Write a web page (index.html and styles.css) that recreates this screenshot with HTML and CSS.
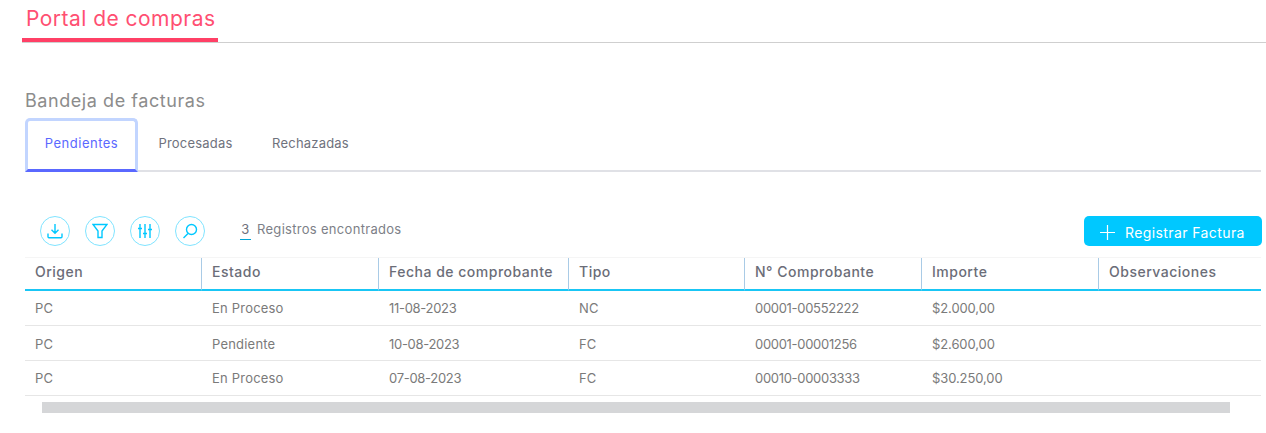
FILE: index.html
```html
<!DOCTYPE html>
<html>
  <head>
    <title>Portal de compras</title>
    <meta name="viewport" content="width=device-width, initial-scale=1.0" />
    <link rel="stylesheet" href="styles.css">
  </head>
  <body>
    <div class="portal-header">
      <div class="portal-title">Portal de compras</div>
    </div>

    <div class="inbox">
      <h2>Bandeja de facturas</h2>
      <div class="tabs">
        <div class="tab active">Pendientes</div>
        <div class="tab">Procesadas</div>
        <div class="tab">Rechazadas</div>
      </div>

      <div class="toolbar">
        <div class="icon-buttons">
          <div class="icon-button">
            <svg width="16" height="16" viewBox="0 0 16 16"><path d="M8 1v9M4.500 6.800 8 10.200l3.500-3.400M1 10.500v3.200a1 1 0 0 0 1 1h12a1 1 0 0 0 1-1v-3.200"/></svg>
          </div>
          <div class="icon-button">
            <svg width="16" height="16" viewBox="0 0 16 16"><path d="M1 1.500h14L10 8v6.500H6V8z"/></svg>
          </div>
          <div class="icon-button">
            <svg width="16" height="16" viewBox="0 0 16 16"><path d="M3 1v14M8 1v14M13 1v14M1 5.500h4M6 10.500h4M11 6.500h4"/></svg>
          </div>
          <div class="icon-button">
            <svg width="16" height="16" viewBox="0 0 16 16"><circle cx="9.500" cy="6.500" r="5"/><path d="M6 10.500 1.500 15"/></svg>
          </div>
        </div>
        <div class="record-count"><span class="count">3</span>Registros encontrados</div>
        <button class="action-button">
          <svg width="15" height="15" viewBox="0 0 15 15"><path d="M7.500 0v15M0 7.500h15"/></svg>
          Registrar Factura
        </button>
      </div>

      <table class="invoice-table">
        <thead>
          <tr>
            <th class="col-origin">Origen</th>
            <th class="col-state">Estado</th>
            <th class="col-date">Fecha de comprobante</th>
            <th class="col-type">Tipo</th>
            <th class="col-number">N° Comprobante</th>
            <th class="col-amount">Importe</th>
            <th>Observaciones</th>
          </tr>
        </thead>
        <tbody>
          <tr>
            <td>PC</td>
            <td>En Proceso</td>
            <td class="digits">11-08-2023</td>
            <td>NC</td>
            <td class="digits">00001-00552222</td>
            <td class="money">$2.000,00</td>
            <td></td>
          </tr>
          <tr>
            <td>PC</td>
            <td>Pendiente</td>
            <td class="digits">10-08-2023</td>
            <td>FC</td>
            <td class="digits">00001-00001256</td>
            <td class="money">$2.600,00</td>
            <td></td>
          </tr>
          <tr>
            <td>PC</td>
            <td>En Proceso</td>
            <td class="digits">07-08-2023</td>
            <td>FC</td>
            <td class="digits">00010-00003333</td>
            <td class="money">$30.250,00</td>
            <td></td>
          </tr>
        </tbody>
      </table>
      <div class="scroll-track"><div class="scroll-thumb"></div></div>
    </div>
  </body>
</html>
```

FILE: styles.css
```css
body {
  font-family: Inter, "Noto Sans", sans-serif;
  background-color: #fff;
  margin: 0;
  padding: 0;
  height: 433px;
  overflow: hidden;
}

.portal-header {
  margin-left: 22px;
  border-bottom: 1px solid #cfcfcf;
  height: 42px;
}

.portal-title {
  width: 196px;
  height: 42px;
  box-sizing: border-box;
  border-bottom: 4px solid #ff4066;
  margin-bottom: -1px;
  padding: 5px 0 0 4px;
  font-size: 21px;
  line-height: 27px;
  letter-spacing: 0.47px;
  color: #ff4f72;
  white-space: nowrap;
}

.inbox {
  padding: 0 5px 0 25px;
}

h2 {
  margin: 46px 0 0;
  font-size: 18px;
  line-height: 24px;
  font-weight: 400;
  letter-spacing: 0.56px;
  color: #8c8c8c;
}

.tabs {
  display: flex;
  margin-top: 5px;
  height: 54px;
  box-sizing: border-box;
  border-bottom: 2px solid #e0e1e6;
}

.tab {
  width: 113px;
  height: 54px;
  box-sizing: border-box;
  padding-top: 15px;
  font-size: 13px;
  line-height: 20px;
  letter-spacing: 0.2px;
  text-align: center;
  color: #6f727d;
}

.tab + .tab {
  width: 114px;
  padding-left: 1px;
}

.tab:last-child {
  padding-left: 3px;
}

.tab.active {
  color: #5a68ff;
  letter-spacing: 0.5px;
  border: 3px solid #c2d5ff;
  border-bottom: 3px solid #5a68ff;
  border-radius: 5px 5px 0 0;
  padding-top: 12px;
}

.toolbar {
  display: flex;
  align-items: center;
  margin-top: 44px;
  height: 30px;
  padding-left: 15px;
  margin-right: -1px;
}

.icon-buttons {
  display: flex;
  gap: 15px;
}

.icon-button {
  width: 30px;
  height: 30px;
  box-sizing: border-box;
  border: 1px solid #7fe4ff;
  border-radius: 50%;
  display: flex;
  align-items: center;
  justify-content: center;
}

.icon-button svg {
  fill: none;
  stroke: #00c8ff;
  stroke-width: 1.4;
}

.record-count {
  margin-left: 35px;
  margin-top: -3px;
  font-size: 13px;
  line-height: 20px;
  letter-spacing: 0.3px;
  color: #7d7f88;
}

.count {
  display: inline-block;
  width: 11px;
  margin-right: 6px;
  text-align: center;
  color: #6f727d;
  border-bottom: 1px solid #00a5d6;
}

.action-button {
  display: flex;
  align-items: center;
  gap: 10px;
  margin-left: auto;
  width: 178px;
  height: 30px;
  padding: 2px 0 0 16px;
  font-family: inherit;
  font-size: 14px;
  letter-spacing: 0.4px;
  color: #fff;
  background-color: #00c8ff;
  border: none;
  border-radius: 5px;
  cursor: pointer;
  white-space: nowrap;
}

.action-button svg {
  fill: none;
  stroke: #fff;
  stroke-width: 1.2;
}

.invoice-table {
  width: 1236px;
  margin-top: 11px;
  table-layout: fixed;
  border-collapse: separate;
  border-spacing: 0;
  border-top: 1px solid #f5f5f5;
}

.invoice-table th {
  box-sizing: border-box;
  height: 33px;
  padding: 0 0 4px 10px;
  font-size: 14px;
  font-weight: 500;
  letter-spacing: 0.5px;
  text-align: left;
  color: #6b6d78;
  white-space: nowrap;
  border-bottom: 2px solid #19c6f5;
  border-left: 1px solid #a9cbe6;
}

.invoice-table th:first-child {
  border-left: none;
}

.col-origin {
  width: 176px;
}

.col-state,
.col-number,
.col-amount {
  width: 177px;
}

.col-date {
  width: 190px;
}

.col-type {
  width: 176px;
}

.invoice-table td {
  box-sizing: border-box;
  height: 35px;
  padding: 0 0 1px 11px;
  font-size: 13px;
  letter-spacing: 0.2px;
  color: #7a7a7a;
  border-bottom: 1px solid #e6e6e6;
}

.invoice-table td:first-child {
  padding-left: 10px;
}

.invoice-table tr:nth-child(2) td {
  padding-top: 2px;
  padding-bottom: 0;
}

.invoice-table td.digits {
  letter-spacing: -0.3px;
}

.invoice-table td.money {
  letter-spacing: -0.1px;
}

.scroll-track {
  margin: 6px 0 0 17px;
  width: 1188px;
}

.scroll-thumb {
  height: 11px;
  background-color: #d5d6d8;
}
```
